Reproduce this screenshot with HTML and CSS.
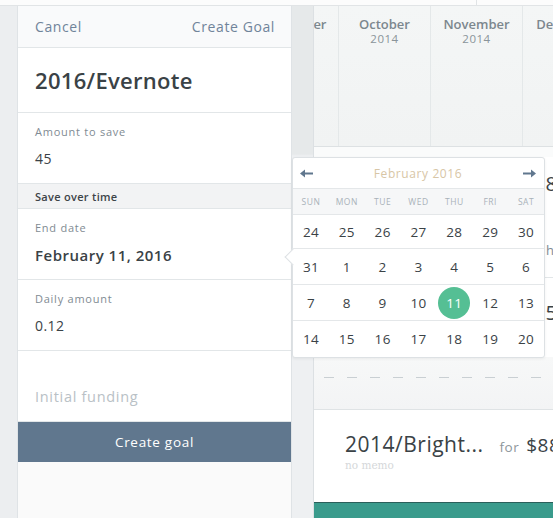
FILE: index.html
```html
<!DOCTYPE html>
<html lang="en">
<head>
<meta charset="utf-8">
<title>Create Goal</title>
<link rel="stylesheet" href="styles.css">
</head>
<body>
<div class="topbar"><div class="topbar-split"></div></div>
<div class="main">
  <div class="gutter"></div>
  <aside class="panel">
    <div class="panel-head">
      <span class="link">Cancel</span>
      <span class="link">Create Goal</span>
    </div>
    <div class="title-block"><h1 class="title">2016/Evernote</h1></div>
    <div class="field">
      <div class="label">Amount to save</div>
      <div class="value">45</div>
    </div>
    <div class="section">Save over time</div>
    <div class="field">
      <div class="label">End date</div>
      <div class="value value-strong">February 11, 2016</div>
    </div>
    <div class="field">
      <div class="label">Daily amount</div>
      <div class="value">0.12</div>
    </div>
    <div class="field field-placeholder">
      <div class="placeholder">Initial funding</div>
    </div>
    <button class="create-btn">Create goal</button>
    <div class="panel-rest"></div>
  </aside>
  <div class="rail"></div>
  <section class="timeline">
    <div class="months">
      <div class="month month-cut"><div class="m-name">September</div><div class="m-year">2014</div></div>
      <div class="month"><div class="m-name">October</div><div class="m-year">2014</div></div>
      <div class="month"><div class="m-name">November</div><div class="m-year">2014</div></div>
      <div class="month"><div class="m-name">December</div><div class="m-year">2014</div></div>
    </div>
    <div class="gap-row"></div>
    <div class="goal-row goal-row-first">
      <div class="g-line"><span class="g-amount">$88</span></div>
      <div class="g-sub">hidden</div>
    </div>
    <div class="goal-row goal-row-second">
      <div class="g-line"><span class="g-amount">$50</span></div>
    </div>
    <div class="dash-zone"><div class="dashes"></div></div>
    <div class="goal-card">
      <div class="card-line">
        <span class="card-title">2014/Bright...</span>
        <span class="card-for">for</span>
        <span class="card-amount">$88</span>
      </div>
      <div class="card-memo">no memo</div>
    </div>
    <div class="progress"></div>
  </section>
</div>

<div class="datepicker">
  <div class="dp-head">
    <svg class="dp-arrow" width="13" height="9" viewBox="0 0 13 9"><polygon points="0,4.5 5,0.5 5,8.5" fill="#60778e"/><rect x="4" y="3.5" width="9" height="2" fill="#60778e"/></svg>
    <span class="dp-title">February 2016</span>
    <svg class="dp-arrow" width="13" height="9" viewBox="0 0 13 9"><polygon points="13,4.5 8,0.5 8,8.5" fill="#60778e"/><rect x="0" y="3.5" width="9" height="2" fill="#60778e"/></svg>
  </div>
  <div class="dp-week">
    <span>Sun</span><span>Mon</span><span>Tue</span><span>Wed</span><span>Thu</span><span>Fri</span><span>Sat</span>
  </div>
  <div class="dp-row"><span>24</span><span>25</span><span>26</span><span>27</span><span>28</span><span>29</span><span>30</span></div>
  <div class="dp-row"><span>31</span><span>1</span><span>2</span><span>3</span><span>4</span><span>5</span><span>6</span></div>
  <div class="dp-row"><span>7</span><span>8</span><span>9</span><span>10</span><span class="dp-selected"><b>11</b></span><span>12</span><span>13</span></div>
  <div class="dp-row dp-row-last"><span>14</span><span>15</span><span>16</span><span>17</span><span>18</span><span>19</span><span>20</span></div>
</div>
</body>
</html>
```

FILE: styles.css
```css
* { box-sizing: border-box; }
html, body { margin: 0; padding: 0; }
body {
  width: 553px;
  height: 518px;
  overflow: hidden;
  position: relative;
  background: #eceef0;
  font-family: "Open Sans", "Liberation Sans", sans-serif;
  color: #3d4448;
}

.topbar {
  height: 6px;
  background: #fcfcfc;
  border-bottom: 1px solid #e1e4e6;
  position: relative;
}
.topbar-split {
  position: absolute;
  left: 476px;
  top: 0;
  width: 1px;
  height: 5px;
  background: #e1e4e6;
}

.main {
  display: flex;
  height: 512px;
}
.gutter {
  width: 17px;
  flex: none;
  background: #eceef0;
}

/* ---------- left panel ---------- */
.panel {
  width: 275px;
  flex: none;
  display: flex;
  flex-direction: column;
  background: #fff;
  border-left: 1px solid #dfe3e6;
  border-right: 1px solid #dfe3e6;
}
.panel-head {
  height: 42px;
  flex: none;
  display: flex;
  align-items: center;
  justify-content: space-between;
  padding: 0 16px 0 17px;
  background: #f9fafb;
  border-bottom: 1px solid #e2e6e8;
}
.link {
  font-size: 14px;
  color: #70849a;
  letter-spacing: 0.6px;
}
.title-block {
  height: 65px;
  flex: none;
  display: flex;
  align-items: center;
  padding: 0 17px;
  border-bottom: 1px solid #e2e6e8;
}
.title {
  margin: 0;
  font-size: 22px;
  font-weight: 600;
  color: #3a4246;
  letter-spacing: 0.3px;
}
.field {
  height: 71px;
  flex: none;
  padding: 11px 17px 0;
  border-bottom: 1px solid #e2e6e8;
}
.label {
  font-size: 11px;
  line-height: 15px;
  color: #7f8b93;
  letter-spacing: 0.75px;
}
.value {
  margin-top: 10px;
  font-size: 14px;
  line-height: 20px;
  color: #3a4246;
  letter-spacing: 0.4px;
}
.value-strong {
  font-size: 15px;
  font-weight: 600;
  letter-spacing: 0.5px;
}
.section {
  height: 25px;
  flex: none;
  display: flex;
  align-items: center;
  padding: 0 17px;
  font-size: 11px;
  font-weight: 600;
  color: #3d4448;
  letter-spacing: 0.3px;
  background: #f2f3f4;
  border-bottom: 1px solid #e2e6e8;
}
.field-placeholder {
  height: 71px;
  padding: 37px 17px 0;
}
.placeholder {
  font-size: 14.5px;
  line-height: 18px;
  color: #b9c1c6;
  letter-spacing: 0.7px;
}
.create-btn {
  height: 40px;
  flex: none;
  border: 0;
  margin: 0;
  background: #60778e;
  color: #fff;
  font-family: inherit;
  font-size: 13.5px;
  letter-spacing: 0.7px;
}
.panel-rest {
  flex: 1;
  background: #fafafa;
}

/* ---------- rail between panel and timeline ---------- */
.rail {
  width: 22px;
  flex: none;
  background: linear-gradient(#e6e9ea 0, #e6e9ea 148px, #eef0f2 150px);
  border-right: 1px solid #dce0e3;
}

/* ---------- timeline ---------- */
.timeline {
  flex: 1;
  min-width: 0;
  overflow: hidden;
  display: flex;
  flex-direction: column;
  background: #fff;
}
.months {
  height: 141px;
  flex: none;
  display: flex;
  margin-left: -68px;
  background: linear-gradient(#f4f6f6, #f1f3f3);
  border-bottom: 1px solid #dde1e3;
}
.month {
  width: 92px;
  flex: none;
  text-align: center;
  padding-top: 10px;
  border-left: 1px solid #e4e8e9;
}
.month-cut { border-left: 0; }
.m-name {
  font-size: 13px;
  line-height: 16px;
  font-weight: 600;
  color: #7c878e;
  white-space: nowrap;
}
.m-year {
  font-size: 11.5px;
  line-height: 14px;
  color: #8a949a;
  letter-spacing: 0.5px;
}
.gap-row {
  height: 10px;
  flex: none;
  background: #fafbfb;
}
.goal-row {
  flex: none;
  padding-left: 220px;
  white-space: nowrap;
  overflow: hidden;
  border-bottom: 1px solid #e2e6e8;
}
.goal-row-first {
  height: 121px;
  padding-top: 13px;
}
.goal-row-second {
  height: 79px;
  padding-top: 21px;
  border-bottom: 0;
}
.g-amount {
  font-size: 20px;
  color: #3a4246;
}
.g-sub {
  margin-top: 44px;
  margin-left: 12px;
  font-size: 13px;
  color: #7f8b93;
}
.dash-zone {
  height: 53px;
  flex: none;
  padding: 20px 10px 0;
  background: linear-gradient(#f7f8f8, #f3f4f5);
  border-bottom: 1px solid #dfe3e5;
}
.dashes {
  height: 1px;
  background: repeating-linear-gradient(90deg, #c9cfd3 0, #c9cfd3 10px, transparent 10px, transparent 23px);
}
.goal-card {
  height: 92px;
  flex: none;
  padding: 20px 0 0 31px;
  background: #fff;
  white-space: nowrap;
}
.card-line {
  display: flex;
  align-items: baseline;
}
.card-title {
  font-size: 21px;
  color: #3a4246;
  letter-spacing: 0.5px;
}
.card-for {
  margin-left: 16px;
  font-size: 13.5px;
  color: #8d969b;
  letter-spacing: 0.5px;
}
.card-amount {
  margin-left: 7px;
  font-size: 19px;
  color: #3a4246;
  letter-spacing: 0.5px;
}
.card-memo {
  font-family: "DejaVu Serif", "Liberation Serif", serif;
  font-size: 10.5px;
  color: #d5d8da;
  margin-top: 1px;
}
.progress {
  flex: 1;
  background: #3a9b8c;
  border-top: 1px solid #2a5f5a;
}

/* ---------- date picker popover ---------- */
.datepicker {
  position: absolute;
  left: 292px;
  top: 157px;
  width: 253px;
  height: 201px;
  background: #fff;
  border: 1px solid #dde1e4;
  border-radius: 3px;
  box-shadow: 0 1px 3px rgba(0, 0, 0, 0.06);
}
.datepicker::before {
  content: "";
  position: absolute;
  left: -6px;
  top: 93px;
  width: 11px;
  height: 11px;
  background: #fff;
  border-left: 1px solid #dde1e4;
  border-bottom: 1px solid #dde1e4;
  transform: rotate(45deg);
}
.dp-head {
  height: 31px;
  display: flex;
  align-items: center;
  justify-content: space-between;
  padding: 0 8px 0 7px;
  border-bottom: 1px solid #e4e7e9;
}
.dp-arrow { display: block; }
.dp-title {
  font-size: 12px;
  color: #d8c6a6;
  letter-spacing: 0.6px;
}
.dp-week {
  height: 26px;
  display: grid;
  grid-template-columns: repeat(7, 1fr);
  align-items: center;
  background: #f6f7f8;
  border-bottom: 1px solid #e4e7e9;
}
.dp-week span {
  text-align: center;
  font-size: 8.5px;
  text-transform: uppercase;
  letter-spacing: 0.5px;
  color: #a9b2b8;
}
.dp-row {
  height: 36px;
  display: grid;
  grid-template-columns: repeat(7, 1fr);
  align-items: center;
  border-bottom: 1px solid #e4e7e9;
}
.dp-row:nth-child(3) { height: 34px; }
.dp-row-last { border-bottom: 0; }
.dp-row span {
  display: flex;
  justify-content: center;
  align-items: center;
  font-size: 13.5px;
  font-weight: 500;
  color: #3a4246;
  letter-spacing: 0.3px;
}
.dp-selected b {
  width: 32px;
  height: 32px;
  border-radius: 50%;
  background: #55bf94;
  color: #fff;
  font-weight: 500;
  display: flex;
  align-items: center;
  justify-content: center;
}
```
